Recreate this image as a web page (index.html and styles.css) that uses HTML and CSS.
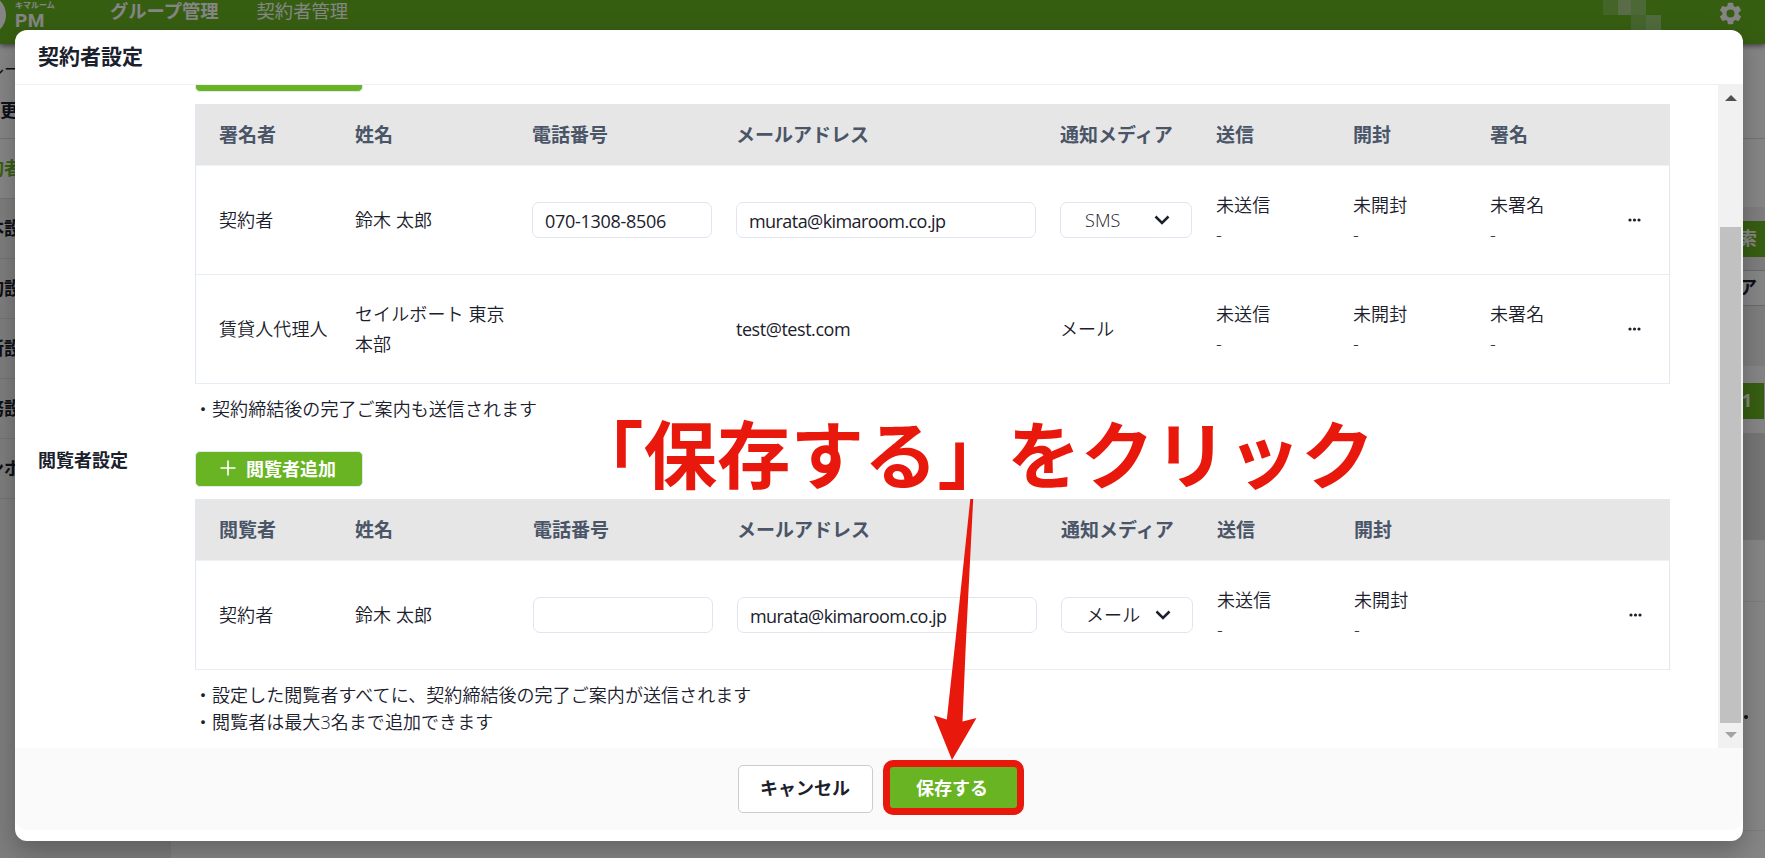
FILE: index.html
```
<!DOCTYPE html>
<html lang="ja">
<head>
    <meta charset="UTF-8">
    <meta name="viewport" content="width=device-width, initial-scale=1.0">
    <title>契約者設定</title>
    <link rel="stylesheet" href="styles.css">
</head>
<body>
    <div class="page">
        <header class="topbar">
            <div class="logo-mark"></div>
            <div class="logo-text"><small>キマルーム</small><b>PM</b></div>
            <nav>
                <a class="active">グループ管理</a>
                <a>契約者管理</a>
            </nav>
            <div class="account">
                <i class="p1"></i><i class="p2"></i><i class="p3"></i>
                <i class="p4"></i><i class="p5"></i>
            </div>
            <svg class="gear" viewBox="0 0 24 24"><path d="M19.14 12.94c.04-.3.06-.61.06-.94s-.02-.64-.07-.94l2.03-1.58a.49.49 0 0 0 .12-.61l-1.92-3.32a.49.49 0 0 0-.59-.22l-2.39.96a7 7 0 0 0-1.62-.94l-.36-2.54a.48.48 0 0 0-.48-.41h-3.84a.48.48 0 0 0-.47.41l-.36 2.54c-.59.24-1.13.57-1.62.94l-2.39-.96a.48.48 0 0 0-.59.22L2.74 8.87a.48.48 0 0 0 .12.61l2.03 1.58c-.05.3-.09.63-.09.94s.02.64.07.94l-2.03 1.58a.49.49 0 0 0-.12.61l1.92 3.32c.12.22.37.29.59.22l2.39-.96c.5.38 1.03.7 1.62.94l.36 2.54c.05.24.24.41.48.41h3.84c.24 0 .44-.17.47-.41l.36-2.54a7 7 0 0 0 1.62-.94l2.39.96c.22.08.47 0 .59-.22l1.92-3.32a.48.48 0 0 0-.12-.61zM12 15.6a3.6 3.6 0 1 1 0-7.2 3.6 3.6 0 0 1 0 7.2z"/></svg>
        </header>
        <div class="columns">
            <aside>
                <div class="crumb">ルー</div>
                <div class="item head">更</div>
                <div class="item current">約者</div>
                <div class="item">本設</div>
                <div class="item">約設</div>
                <div class="item">新設</div>
                <div class="item">務設</div>
                <div class="item">ンポ</div>
            </aside>
            <main>
                <div class="block b1"></div>
                <div class="block b2"></div>
                <div class="block b3"></div>
                <div class="block search"><span>索</span></div>
                <div class="block b4"></div>
                <div class="block media"><span>ア</span></div>
                <div class="block b5"></div>
                <div class="block b6"></div>
                <div class="block page-no"><span>1</span></div>
                <div class="block b7"></div>
                <div class="block b8"></div>
                <div class="block b9"></div>
                <div class="block b10"><i class="more"></i></div>
            </main>
        </div>
    </div>
    <div class="overlay"></div>

    <div class="modal">
        <div class="modal-header">契約者設定</div>
        <div class="modal-body">
            <div class="content">
                <section>
                    <h3></h3>
                    <div>
                        <div class="add"></div>
                        <table>
                            <colgroup><col class="c1"><col class="c2"><col class="c3"><col class="c4"><col class="c5"><col class="c6"><col class="c6"><col class="c6"><col></colgroup>
                            <tr>
                                <th>署名者</th><th>姓名</th><th>電話番号</th><th>メールアドレス</th><th>通知メディア</th><th>送信</th><th>開封</th><th>署名</th><th></th>
                            </tr>
                            <tr>
                                <td>契約者</td>
                                <td>鈴木 太郎</td>
                                <td><div class="input tel">070-1308-8506</div></td>
                                <td><div class="input mail">murata@kimaroom.co.jp</div></td>
                                <td><div class="select"><span>SMS</span><svg viewBox="0 0 16 10"><path d="M1.5 1.5 8 8l6.5-6.5"/></svg></div></td>
                                <td>未送信<br>-</td>
                                <td>未開封<br>-</td>
                                <td>未署名<br>-</td>
                                <td><svg class="dots" viewBox="0 0 13 4"><circle cx="2" cy="2" r="1.6"/><circle cx="6.5" cy="2" r="1.6"/><circle cx="11" cy="2" r="1.6"/></svg></td>
                            </tr>
                            <tr>
                                <td class="nowrap">賃貸人代理人</td>
                                <td>セイルボート 東京<br>本部</td>
                                <td></td>
                                <td><span class="plain-mail">test@test.com</span></td>
                                <td>メール</td>
                                <td>未送信<br>-</td>
                                <td>未開封<br>-</td>
                                <td>未署名<br>-</td>
                                <td><svg class="dots" viewBox="0 0 13 4"><circle cx="2" cy="2" r="1.6"/><circle cx="6.5" cy="2" r="1.6"/><circle cx="11" cy="2" r="1.6"/></svg></td>
                            </tr>
                        </table>
                        <p class="notes">・契約締結後の完了ご案内も送信されます</p>
                    </div>
                </section>
                <section class="viewers">
                    <h3>閲覧者設定</h3>
                    <div>
                        <div class="add"><svg viewBox="0 0 16 16"><path d="M8 .5v15M.5 8h15"/></svg>閲覧者追加</div>
                        <table class="second">
                            <colgroup><col class="c1"><col class="c2"><col class="c3"><col class="c4"><col class="c5"><col class="c6"><col class="c6"><col class="c6"><col></colgroup>
                            <tr>
                                <th>閲覧者</th><th>姓名</th><th>電話番号</th><th>メールアドレス</th><th>通知メディア</th><th>送信</th><th>開封</th><th></th><th></th>
                            </tr>
                            <tr>
                                <td>契約者</td>
                                <td>鈴木 太郎</td>
                                <td><div class="input tel"></div></td>
                                <td><div class="input mail">murata@kimaroom.co.jp</div></td>
                                <td><div class="select"><span>メール</span><svg viewBox="0 0 16 10"><path d="M1.5 1.5 8 8l6.5-6.5"/></svg></div></td>
                                <td>未送信<br>-</td>
                                <td>未開封<br>-</td>
                                <td></td>
                                <td><svg class="dots" viewBox="0 0 13 4"><circle cx="2" cy="2" r="1.6"/><circle cx="6.5" cy="2" r="1.6"/><circle cx="11" cy="2" r="1.6"/></svg></td>
                            </tr>
                        </table>
                        <p class="notes">・設定した閲覧者すべてに、契約締結後の完了ご案内が送信されます<br>・閲覧者は最大3名まで追加できます</p>
                    </div>
                </section>
            </div>
            <div class="scrollbar">
                <svg viewBox="0 0 12 6"><path d="M6 0l6 6H0z"/></svg>
                <div class="thumb"></div>
                <svg class="down" viewBox="0 0 12 6"><path d="M0 0h12L6 6z"/></svg>
            </div>
        </div>
        <div class="modal-footer">
            <div class="btn">キャンセル</div>
            <div class="btn save">保存する</div>
        </div>
    </div>

    <!-- guide drawn over the dialog -->
    <div class="guide-text">「保存する」<span>をクリック</span></div>
    <svg class="guide-arrow" viewBox="0 0 44 262"><path d="M37.3 0h2.9L33 141l-3.5 81.5L43.5 219 19 261 1 216.500l12.800 4L22.500 141z"/></svg>
    <div class="guide-frame"></div>
</body>
</html>
```
FILE: styles.css
```
* {
    box-sizing: border-box;
}
body {
    margin: 0;
    width: 1765px;
    height: 858px;
    overflow: hidden;
    position: relative;
    font-family: "Open Sans", "Noto Sans CJK JP", sans-serif;
    font-size: 18px;
    color: #1a202c;
}

/* page behind the dialog */
.page {
    height: 858px;
    overflow: hidden;
    background: #fff;
}
.topbar {
    height: 44px;
    display: flex;
    align-items: flex-start;
    background: #68b422;
    color: #fff;
    box-shadow: 0 2px 5px rgba(0, 0, 0, 0.5);
    position: relative;
}
.logo-mark {
    width: 40px;
    height: 40px;
    margin: -5px 0 0 -34px;
    border-radius: 50%;
    background: #fff;
}
.logo-text {
    width: 95px;
    margin-left: 9px;
    display: flex;
    flex-direction: column;
}
.logo-text small {
    font-size: 8px;
    line-height: 10px;
    font-weight: bold;
}
.logo-text b {
    font-family: Roboto, sans-serif;
    font-size: 19px;
    line-height: 22px;
    letter-spacing: 0.5px;
}
nav {
    display: flex;
    gap: 38px;
    font-size: 18.3px;
    line-height: 22px;
}
nav .active {
    font-weight: bold;
}
.account {
    display: grid;
    grid-template-columns: 15px 13px 15px 15px;
    grid-auto-rows: 15px;
    margin-left: auto;
}
.p1 { background: #83c04e; }
.p2 { background: #acce8a; }
.p3 { background: #95c86a; }
.p4 { background: #87c258; grid-area: 2 / 3; }
.p5 { background: #9acd75; grid-area: 2 / 4; }
.gear {
    width: 27px;
    height: 27px;
    margin: 0 21px 0 56px;
    fill: #fff;
}
.columns {
    display: flex;
}
aside {
    width: 171px;
    flex: none;
    background: #f0f0f0;
    height: 814px;
    font-weight: bold;
}
.crumb {
    height: 50px;
    line-height: 50px;
    background: #fff;
    font-weight: normal;
    text-indent: -14px;
}
.item {
    height: 60px;
    line-height: 59px;
    border-bottom: 1px solid #ddd;
    text-indent: -14px;
}
.item.head {
    height: 45px;
    line-height: 32px;
    background: #fff;
    text-indent: 0;
}
.item.current {
    background: #fff;
    color: #68b422;
}
main {
    flex: 1;
    font-weight: bold;
}
.block {
    height: 20px;
    text-align: right;
    background: #fff;
}
.block span {
    margin-right: 8px;
}
.b1 { height: 95px; border-bottom: 1px solid #ddd; }
.b2 { height: 68px; }
.b3 { height: 14px; background: #f0f0f0; }
.search { height: 36px; line-height: 34px; background: #68b422; color: #fff; }
.b4 { height: 13px; background: #f0f0f0; }
.media { height: 36px; line-height: 32px; border: solid #ccc; border-width: 1px 0; }
.b5 { height: 60px; background: #f0f0f0; }
.b6 { height: 17px; }
.page-no { height: 36px; line-height: 34px; background: #68b422; color: #fff; margin-right: 1px; }
.block.page-no span { margin-right: 12px; }
.b7 { height: 14px; }
.b8 { height: 107px; background: #e0e0e0; }
.b9 { height: 62px; border-bottom: 1px solid #eee; }
.b10 {
    height: 229px;
    border-bottom: 1px solid #eee;
    margin-left: 24px;
    border-left: 1px solid #d8d8e6;
    display: flex;
    justify-content: flex-end;
    padding: 113px 17px 0 0;
}
.more {
    width: 4px;
    height: 4px;
    border-radius: 50%;
    background: #1a202c;
}
.overlay {
    position: absolute;
    inset: 0;
    background: rgba(0, 0, 0, 0.48);
}

/* dialog */
.modal {
    position: absolute;
    left: 15px;
    top: 30px;
    width: 1728px;
    height: 811px;
    display: flex;
    flex-direction: column;
    background: #fff;
    border-radius: 12px;
    box-shadow: 0 10px 25px rgba(0, 0, 0, 0.25);
    overflow: hidden;
}
.modal-header {
    height: 55px;
    padding-left: 23px;
    border-bottom: 1px solid #edf2f7;
    font-size: 21px;
    font-weight: bold;
    line-height: 52px;
}
.modal-body {
    height: 663px;
    display: flex;
    overflow: hidden;
}
.content {
    flex: 1;
    margin-top: -29px;
}
section {
    display: grid;
    grid-template-columns: 157px 1475px;
    padding-left: 23px;
}
h3 {
    margin: 0;
    font-size: 18px;
    line-height: 18px;
}
.add {
    width: 168px;
    height: 36px;
    display: flex;
    align-items: center;
    padding: 0 0 3px 24px;
    border: 1px solid #e2e8f0;
    border-radius: 5px;
    background: #68b422;
    color: #fff;
    font-weight: bold;
}
.add svg {
    width: 16px;
    height: 16px;
    margin-right: 10px;
    stroke: #fff;
    stroke-width: 1.7;
}
table {
    width: 1475px;
    margin-top: 12px;
    table-layout: fixed;
    border-collapse: separate;
    border-spacing: 0;
    border: solid #e2e8f0;
    border-width: 1px 1px 0;
}
.c1 { width: 136px; }
.c2 { width: 177px; }
.c3 { width: 204px; }
.c4 { width: 324px; }
.c5 { width: 156px; }
.c6 { width: 137px; }
.second .c2 { width: 178px; }
th {
    height: 61px;
    padding: 0 0 2px 23px;
    background: #e6e6e6;
    border-bottom: 1px solid #edf2f7;
    color: #4a5568;
    font-size: 19px;
    text-align: left;
    white-space: nowrap;
}
td {
    height: 109px;
    padding: 0 0 0 23px;
    border-bottom: 1px solid #e8ecf4;
    font-weight: 350;
    line-height: 30px;
    letter-spacing: 0.1px;
}
.nowrap {
    white-space: nowrap;
}
.input,
.select {
    height: 36px;
    border: 1px solid #e2e4f0;
    border-radius: 7px;
}
.input {
    padding: 3px 0 0 12px;
    font-weight: 400;
    letter-spacing: -0.3px;
}
.tel { width: 180px; }
.mail {
    width: 300px;
    letter-spacing: -0.57px;
}
.plain-mail {
    font-weight: 400;
    letter-spacing: -0.45px;
}
.select {
    width: 132px;
    display: flex;
    align-items: center;
    justify-content: space-between;
    padding: 0 21px 0 24px;
}
.select svg {
    width: 16px;
    height: 10px;
    fill: none;
    stroke: #1a202c;
    stroke-width: 2.5;
}
.dots {
    width: 13px;
    height: 4px;
    display: block;
    margin-left: 1px;
    fill: #1a202c;
}
.notes {
    margin: 12px 0 0 -1px;
    line-height: 27px;
    font-weight: 350;
    letter-spacing: 0.06px;
}
.viewers {
    margin-top: 28px;
}
.scrollbar {
    width: 25px;
    display: flex;
    flex-direction: column;
    align-items: center;
    padding: 10px 0;
    background: #f1f1f1;
}
.scrollbar svg {
    width: 12px;
    height: 6px;
    fill: #505050;
}
.thumb {
    width: 21px;
    height: 496px;
    margin: 126px 0 9px;
    background: #c1c1c1;
}
.scrollbar .down {
    fill: #a3a3a3;
}
.modal-footer {
    height: 82px;
    display: flex;
    justify-content: center;
    gap: 13px;
    padding-top: 17px;
    border-radius: 0 0 12px 12px;
    background: #fafafa;
}
.btn {
    width: 135px;
    height: 48px;
    border: 1px solid #ccc;
    border-radius: 5px;
    background: #fff;
    font-weight: bold;
    line-height: 44px;
    text-align: center;
}
.btn.save {
    padding-right: 2px;
    border-color: #68b422;
    background: #68b422;
    color: #fff;
}

/* guide */
.guide-text {
    position: absolute;
    left: 570px;
    top: 398px;
    font-family: "Noto Sans CJK JP", sans-serif;
    font-size: 73.5px;
    line-height: 106px;
    font-weight: bold;
    color: #e8190c;
    white-space: nowrap;
}
.guide-text span {
    margin-left: -4px;
}
.guide-arrow {
    position: absolute;
    left: 933px;
    top: 499px;
    width: 44px;
    height: 262px;
    fill: #e8190c;
}
.guide-frame {
    position: absolute;
    left: 883px;
    top: 760px;
    width: 141px;
    height: 55px;
    border: 7px solid #e8190c;
    border-radius: 10px;
}
```
